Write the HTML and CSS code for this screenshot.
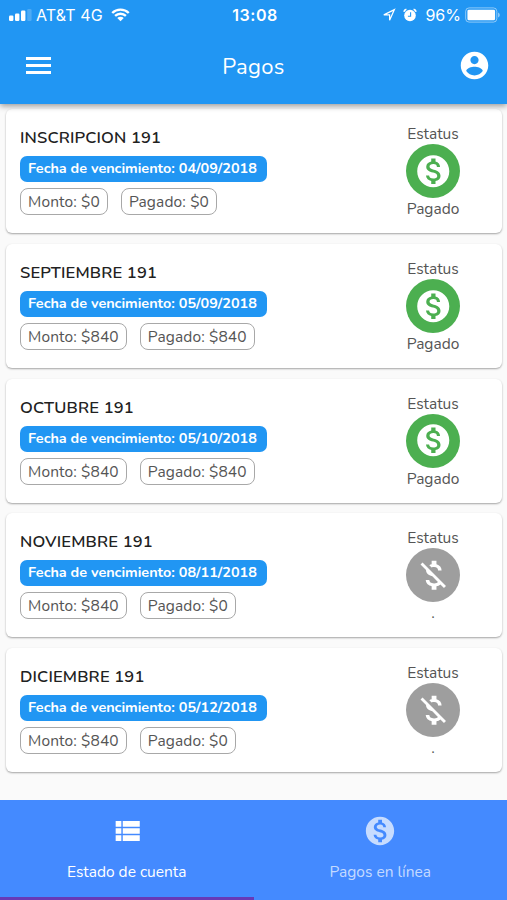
FILE: index.html
```html
<!DOCTYPE html>
<html lang="es">
<head>
    <meta charset="UTF-8">
    <meta name="viewport" content="width=device-width, initial-scale=1.0">
    <title>Pagos</title>
    <link rel="stylesheet" href="styles.css">
</head>
<body>
    <svg class="icon-defs">
        <symbol id="icon-paid" viewBox="0 0 24 24">
            <path d="M12 2C6.48 2 2 6.48 2 12s4.48 10 10 10 10-4.48 10-10S17.52 2 12 2zm1.41 16.09V20h-2.67v-1.93c-1.71-.36-3.16-1.46-3.27-3.4h1.96c.1 1.05.82 1.87 2.65 1.87 1.96 0 2.4-.98 2.4-1.59 0-.83-.44-1.61-2.67-2.14-2.48-.6-4.18-1.62-4.18-3.67 0-1.72 1.39-2.84 3.11-3.21V4h2.67v1.95c1.86.45 2.79 1.86 2.85 3.39H14.3c-.05-1.11-.64-1.87-2.22-1.87-1.5 0-2.4.68-2.4 1.64 0 .84.65 1.39 2.67 1.91s4.18 1.39 4.18 3.91c-.01 1.83-1.38 2.83-3.12 3.16z"/>
        </symbol>
        <symbol id="icon-unpaid" viewBox="0 0 24 24">
            <path d="M12.5 6.9c1.78 0 2.44.85 2.5 2.1h2.21c-.07-1.72-1.12-3.3-3.21-3.81V3h-3v2.16c-.53.12-1.03.3-1.48.54l1.47 1.47c.41-.17.91-.27 1.51-.27zM5.33 4.06L4.06 5.33 7.5 8.77c0 2.08 1.56 3.21 3.91 3.91l3.51 3.51c-.34.48-1.05.91-2.42.91-2.06 0-2.87-.92-2.98-2.1h-2.2c.12 2.19 1.76 3.42 3.68 3.83V21h3v-2.15c.96-.18 1.82-.55 2.45-1.12l2.22 2.22 1.27-1.27L5.33 4.06z"/>
        </symbol>
    </svg>

    <div class="app">
        <header class="app-header">
            <div class="status-bar">
                <div class="status-left">
                    <svg class="signal" viewBox="0 0 23 12">
                        <rect x="0" y="6.5" width="4.4" height="5.5" rx="1.2"/>
                        <rect x="6" y="4.5" width="4.4" height="7.5" rx="1.2"/>
                        <rect x="12" y="1.5" width="4.4" height="10.5" rx="1.2"/>
                        <rect x="18.2" y="0" width="4.4" height="12" rx="1.2" opacity=".2"/>
                    </svg>
                    <span class="carrier">AT&amp;T 4G</span>
                    <svg class="wifi" viewBox="0 0 20 14">
                        <path d="M1.3 4.9a12.4 12.4 0 0 1 17.4 0M4.3 8a8.2 8.2 0 0 1 11.4 0" fill="none" stroke="#fff" stroke-width="2.5"/>
                        <path d="M6.6 10.2a4.9 4.9 0 0 1 6.8 0L10 13.7z"/>
                    </svg>
                </div>
                <div class="clock">13:08</div>
                <div class="status-right">
                    <svg class="location" viewBox="0 0 14 14">
                        <path d="M1.8 6.9L12.4 1.6 7.6 12.2V6.9z" fill="none" stroke="#fff" stroke-width="1.2"/>
                    </svg>
                    <svg class="alarm" viewBox="0 0 14 14">
                        <circle cx="7" cy="7.5" r="5.8"/>
                        <path d="M.9 3.8A3.5 3.5 0 0 1 3.4 1.3M10.6 1.3a3.5 3.5 0 0 1 2.5 2.5" fill="none" stroke="#fff" stroke-width="1.6"/>
                        <path d="M7.6 4.2v4H4.9" fill="none" stroke="#2196f3" stroke-width="1.1"/>
                    </svg>
                    <span class="battery-level">96%</span>
                    <svg class="battery" viewBox="0 0 37 16">
                        <rect x=".7" y=".7" width="32" height="14.6" rx="3.5" fill="none" stroke="#fff" stroke-opacity=".5"/>
                        <rect x="2.5" y="2.5" width="28.4" height="11" rx="1.5"/>
                        <path d="M34 5.5c2.3.8 2.3 4.2 0 5z" opacity=".5"/>
                    </svg>
                </div>
            </div>
            <div class="toolbar">
                <button class="icon-button">
                    <svg class="menu-icon" viewBox="0 0 25 17">
                        <path d="M0 0h25v3H0zM0 7h25v3H0zM0 14h25v3H0z"/>
                    </svg>
                </button>
                <h1 class="app-title">Pagos</h1>
                <button class="icon-button">
                    <svg class="account-icon" viewBox="0 0 24 24">
                        <path d="M12 2C6.48 2 2 6.48 2 12s4.48 10 10 10 10-4.48 10-10S17.52 2 12 2zm0 3c1.66 0 3 1.34 3 3s-1.34 3-3 3-3-1.34-3-3 1.34-3 3-3zm0 14.2c-2.5 0-4.71-1.28-6-3.22.03-1.99 4-3.08 6-3.08 1.99 0 5.97 1.09 6 3.08-1.29 1.94-3.5 3.22-6 3.22z"/>
                    </svg>
                </button>
            </div>
        </header>

        <main class="payment-list">
            <div class="card">
                <div class="card-info">
                    <h2 class="card-title">INSCRIPCION 191</h2>
                    <div class="due-date">Fecha de vencimiento: 04/09/2018</div>
                    <div class="amounts">
                        <span class="chip">Monto: $0</span>
                        <span class="chip">Pagado: $0</span>
                    </div>
                </div>
                <div class="card-status">
                    <span>Estatus</span>
                    <div class="avatar paid"><svg class="avatar-icon"><use href="#icon-paid"/></svg></div>
                    <span>Pagado</span>
                </div>
            </div>
            <div class="card">
                <div class="card-info">
                    <h2 class="card-title">SEPTIEMBRE 191</h2>
                    <div class="due-date">Fecha de vencimiento: 05/09/2018</div>
                    <div class="amounts">
                        <span class="chip">Monto: $840</span>
                        <span class="chip">Pagado: $840</span>
                    </div>
                </div>
                <div class="card-status">
                    <span>Estatus</span>
                    <div class="avatar paid"><svg class="avatar-icon"><use href="#icon-paid"/></svg></div>
                    <span>Pagado</span>
                </div>
            </div>
            <div class="card">
                <div class="card-info">
                    <h2 class="card-title">OCTUBRE 191</h2>
                    <div class="due-date">Fecha de vencimiento: 05/10/2018</div>
                    <div class="amounts">
                        <span class="chip">Monto: $840</span>
                        <span class="chip">Pagado: $840</span>
                    </div>
                </div>
                <div class="card-status">
                    <span>Estatus</span>
                    <div class="avatar paid"><svg class="avatar-icon"><use href="#icon-paid"/></svg></div>
                    <span>Pagado</span>
                </div>
            </div>
            <div class="card">
                <div class="card-info">
                    <h2 class="card-title">NOVIEMBRE 191</h2>
                    <div class="due-date">Fecha de vencimiento: 08/11/2018</div>
                    <div class="amounts">
                        <span class="chip">Monto: $840</span>
                        <span class="chip">Pagado: $0</span>
                    </div>
                </div>
                <div class="card-status">
                    <span>Estatus</span>
                    <div class="avatar"><svg class="avatar-icon"><use href="#icon-unpaid"/></svg></div>
                    <span>.</span>
                </div>
            </div>
            <div class="card">
                <div class="card-info">
                    <h2 class="card-title">DICIEMBRE 191</h2>
                    <div class="due-date">Fecha de vencimiento: 05/12/2018</div>
                    <div class="amounts">
                        <span class="chip">Monto: $840</span>
                        <span class="chip">Pagado: $0</span>
                    </div>
                </div>
                <div class="card-status">
                    <span>Estatus</span>
                    <div class="avatar"><svg class="avatar-icon"><use href="#icon-unpaid"/></svg></div>
                    <span>.</span>
                </div>
            </div>
        </main>

        <nav class="tabs">
            <button class="tab active">
                <svg class="tab-icon" viewBox="0 0 24 24">
                    <path d="M4 14h4v-4H4v4zm0 5h4v-4H4v4zM4 9h4V5H4v4zm5 5h12v-4H9v4zm0 5h12v-4H9v4zM9 5v4h12V5H9z"/>
                </svg>
                <span class="tab-label">Estado de cuenta</span>
            </button>
            <button class="tab">
                <svg class="tab-icon"><use href="#icon-paid"/></svg>
                <span class="tab-label">Pagos en línea</span>
            </button>
        </nav>
    </div>
</body>
</html>
```
FILE: styles.css
```css
* {
    margin: 0;
    padding: 0;
    box-sizing: border-box;
}

body {
    font-family: 'Nunito', 'Noto Sans', sans-serif;
    background: #fafafa;
    color: #555;
    overflow: hidden;
}

button {
    background: none;
    border: none;
    color: inherit;
    font-family: inherit;
    cursor: pointer;
}

svg {
    display: block;
    flex: none;
    fill: currentColor;
}

.icon-defs {
    display: none;
}

.app {
    height: 100vh;
    display: flex;
    flex-direction: column;
}

/* Header */
.app-header {
    flex: none;
    height: 103.5px;
    background: #2196f3;
    color: white;
    box-shadow: 0 2px 6px rgba(0, 0, 0, 0.4);
    z-index: 1;
}

.status-bar {
    height: 30px;
    padding: 0 6px 0 9px;
    display: grid;
    grid-template-columns: 1fr auto 1fr;
    align-items: center;
    font-family: Inter, sans-serif;
    font-size: 16px;
}

.status-left,
.status-right {
    display: flex;
    align-items: center;
}

.status-right {
    justify-content: flex-end;
}

.signal {
    width: 23px;
    height: 12px;
}

.carrier {
    margin: 0 8px 0 4px;
    letter-spacing: 0.1px;
}

.wifi {
    width: 19px;
    height: 14px;
}

.clock {
    font-weight: 600;
    letter-spacing: 0.5px;
}

.location {
    width: 14px;
    height: 14px;
    margin-right: 7px;
}

.alarm {
    width: 14px;
    height: 14px;
    margin-right: 8px;
}

.battery-level {
    margin-right: 4px;
}

.battery {
    width: 36px;
    height: 16px;
}

.toolbar {
    height: 71px;
    padding: 0 16px 0 26px;
    display: flex;
    align-items: center;
    justify-content: space-between;
}

.menu-icon {
    width: 25px;
    height: 17px;
}

.account-icon {
    width: 33px;
    height: 33px;
}

.app-title {
    margin: 2px 2px 0 0;
    font-size: 22px;
    font-weight: 400;
    letter-spacing: 0.3px;
}

/* Payments */
.payment-list {
    flex: 1;
    padding: 5.5px 5px 0 6px;
    display: flex;
    flex-direction: column;
    gap: 10.8px;
}

.card {
    height: 124px;
    padding: 17px 41px 0 14px;
    background: white;
    border-radius: 6px;
    box-shadow: 0 1px 2px rgba(0, 0, 0, 0.35);
    display: flex;
    justify-content: space-between;
}

.card-title {
    height: 23px;
    margin-bottom: 7px;
    color: #212121;
    font-size: 16.5px;
    font-weight: 600;
    line-height: 23px;
    letter-spacing: 0.15px;
}

.due-date {
    width: 247px;
    height: 26px;
    margin-bottom: 6px;
    padding-left: 8px;
    background: #2196f3;
    border-radius: 7px;
    color: white;
    font-size: 14.4px;
    font-weight: 700;
    line-height: 25px;
    white-space: nowrap;
}

.amounts {
    display: flex;
    gap: 13px;
}

.chip {
    height: 27px;
    padding: 0 7px;
    border: 1.5px solid #a8a8a8;
    border-radius: 8px;
    font-size: 15.5px;
    line-height: 26px;
    letter-spacing: 0.13px;
}

.card-status {
    width: 56px;
    margin-top: -3px;
    display: flex;
    flex-direction: column;
    align-items: center;
    font-size: 15.5px;
    line-height: 21px;
}

.avatar {
    width: 54px;
    height: 54px;
    background: #9e9e9e;
    border-radius: 50%;
    color: white;
    display: flex;
    align-items: center;
    justify-content: center;
}

.avatar.paid {
    background: #4caf50;
}

.avatar-icon {
    width: 38.5px;
    height: 38.5px;
}

/* Bottom tabs */
.tabs {
    flex: none;
    height: 100px;
    background: #448aff;
    color: white;
    display: flex;
}

.tab {
    flex: 1;
    padding-top: 14px;
    border-bottom: 3px solid transparent;
    color: rgba(255, 255, 255, 0.7);
    display: flex;
    flex-direction: column;
    align-items: center;
}

.tab.active {
    border-bottom-color: #673ab7;
    color: white;
}

.tab-icon {
    width: 34px;
    height: 34px;
    margin-bottom: 13px;
}

.tab-label {
    font-size: 15.5px;
    line-height: 22px;
}
```
